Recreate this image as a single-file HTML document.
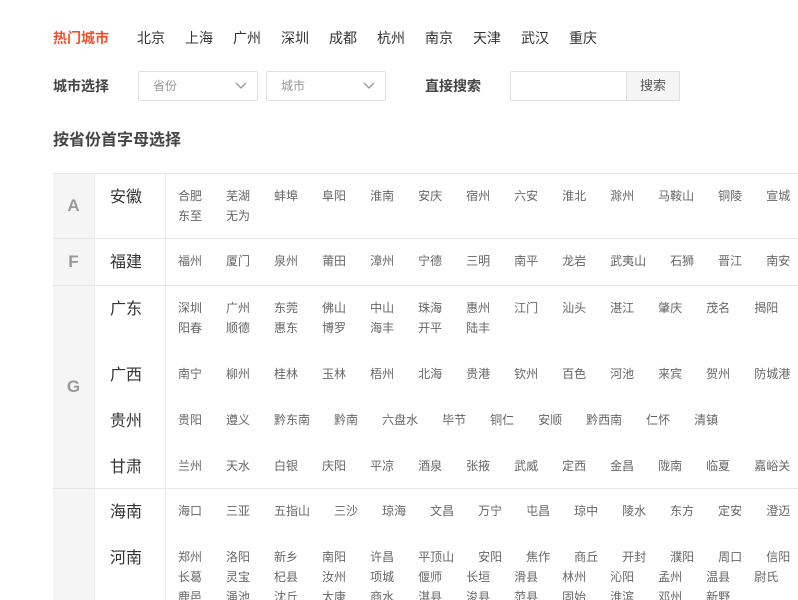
<!DOCTYPE html>
<html><head><meta charset="utf-8"><style>
*{margin:0;padding:0;box-sizing:border-box}
html,body{width:798px;height:600px;overflow:hidden}
body{background:#fff;font-family:"Liberation Sans","Noto Sans CJK SC",sans-serif;color:#333;position:relative}
.abs{position:absolute;white-space:nowrap}
.hot{left:53px;top:28px;font-size:14px;line-height:20px}
.hot b{color:#f0502a;margin-right:28px}
.hot span{margin-right:20px;color:#333}
.lbl{font-size:14px;font-weight:bold;color:#444;line-height:20px}
.sel{border:1px solid #e0e0e0;border-radius:2px;height:30px;font-size:12px;color:#999;line-height:28px;padding-left:14px}
.sel svg{position:absolute;right:10px;top:10px}
.wrap{position:absolute;left:53px;top:173px;width:745px;height:427px;overflow:hidden}
.table{width:800px;border-top:1px solid #e8e8e8}
.grp{display:flex;border-bottom:1px solid #e8e8e8}
.let{width:42px;background:#f5f5f5;color:#999;font-weight:bold;font-size:17px;display:flex;align-items:center;justify-content:center;border-right:1px solid #eee}
.provs{flex:1}
.pv{display:flex}
.pn{width:71px;padding:13px 0 0 15px;font-size:16px;line-height:22px;color:#333;border-right:1px solid #e8e8e8}
.cs{flex:1;padding:12px 0 14px 12px;font-size:12px;line-height:20px;color:#666}
.ln{white-space:nowrap;overflow:hidden;height:20px}
.ln span{margin-right:24px}
</style></head><body>
<div class="abs hot"><b>热门城市</b><span>北京</span><span>上海</span><span>广州</span><span>深圳</span><span>成都</span><span>杭州</span><span>南京</span><span>天津</span><span>武汉</span><span>重庆</span></div>
<div class="abs lbl" style="left:53px;top:76px">城市选择</div>
<div class="abs sel" style="left:138px;top:71px;width:120px">省份<svg width="12" height="8" viewBox="0 0 12 8"><path d="M1 1l5 5 5-5" stroke="#999" stroke-width="1.3" fill="none"/></svg></div>
<div class="abs sel" style="left:266px;top:71px;width:120px">城市<svg width="12" height="8" viewBox="0 0 12 8"><path d="M1 1l5 5 5-5" stroke="#999" stroke-width="1.3" fill="none"/></svg></div>
<div class="abs lbl" style="left:425px;top:76px">直接搜索</div>
<div class="abs" style="left:510px;top:71px;width:117px;height:30px;border:1px solid #e0e0e0;border-right:none"></div>
<div class="abs" style="left:626px;top:71px;width:54px;height:30px;border:1px solid #e0e0e0;background:#f5f5f5;font-size:13px;color:#555;text-align:center;line-height:28px">搜索</div>
<div class="abs" style="left:53px;top:130px;font-size:16px;font-weight:bold;color:#444;line-height:22px">按省份首字母选择</div>
<div class="wrap"><div class="table">
<div class="grp" style="height:65px"><div class="let">A</div><div class="provs">
<div class="pv"><div class="pn">安徽</div><div class="cs"><div class="ln"><span>合肥</span><span>芜湖</span><span>蚌埠</span><span>阜阳</span><span>淮南</span><span>安庆</span><span>宿州</span><span>六安</span><span>淮北</span><span>滁州</span><span>马鞍山</span><span>铜陵</span><span>宣城</span></div><div class="ln"><span>东至</span><span>无为</span></div></div></div>
</div></div>
<div class="grp" style="height:47px"><div class="let">F</div><div class="provs">
<div class="pv"><div class="pn">福建</div><div class="cs"><div class="ln"><span>福州</span><span>厦门</span><span>泉州</span><span>莆田</span><span>漳州</span><span>宁德</span><span>三明</span><span>南平</span><span>龙岩</span><span>武夷山</span><span>石狮</span><span>晋江</span><span>南安</span></div></div></div>
</div></div>
<div class="grp" style="height:203px"><div class="let">G</div><div class="provs">
<div class="pv" style="height:66px"><div class="pn">广东</div><div class="cs"><div class="ln"><span>深圳</span><span>广州</span><span>东莞</span><span>佛山</span><span>中山</span><span>珠海</span><span>惠州</span><span>江门</span><span>汕头</span><span>湛江</span><span>肇庆</span><span>茂名</span><span>揭阳</span></div><div class="ln"><span>阳春</span><span>顺德</span><span>惠东</span><span>博罗</span><span>海丰</span><span>开平</span><span>陆丰</span></div></div></div>
<div class="pv" style="height:46px"><div class="pn">广西</div><div class="cs"><div class="ln"><span>南宁</span><span>柳州</span><span>桂林</span><span>玉林</span><span>梧州</span><span>北海</span><span>贵港</span><span>钦州</span><span>百色</span><span>河池</span><span>来宾</span><span>贺州</span><span>防城港</span></div></div></div>
<div class="pv" style="height:46px"><div class="pn">贵州</div><div class="cs"><div class="ln"><span>贵阳</span><span>遵义</span><span>黔东南</span><span>黔南</span><span>六盘水</span><span>毕节</span><span>铜仁</span><span>安顺</span><span>黔西南</span><span>仁怀</span><span>清镇</span></div></div></div>
<div class="pv" style="height:45px"><div class="pn">甘肃</div><div class="cs"><div class="ln"><span>兰州</span><span>天水</span><span>白银</span><span>庆阳</span><span>平凉</span><span>酒泉</span><span>张掖</span><span>武威</span><span>定西</span><span>金昌</span><span>陇南</span><span>临夏</span><span>嘉峪关</span></div></div></div>
</div></div>
<div class="grp" style="height:300px"><div class="let" style="align-items:flex-start;padding-top:250px">H</div><div class="provs">
<div class="pv" style="height:46px"><div class="pn">海南</div><div class="cs"><div class="ln"><span>海口</span><span>三亚</span><span>五指山</span><span>三沙</span><span>琼海</span><span>文昌</span><span>万宁</span><span>屯昌</span><span>琼中</span><span>陵水</span><span>东方</span><span>定安</span><span>澄迈</span></div></div></div>
<div class="pv" style="height:254px"><div class="pn">河南</div><div class="cs"><div class="ln"><span>郑州</span><span>洛阳</span><span>新乡</span><span>南阳</span><span>许昌</span><span>平顶山</span><span>安阳</span><span>焦作</span><span>商丘</span><span>开封</span><span>濮阳</span><span>周口</span><span>信阳</span></div><div class="ln"><span>长葛</span><span>灵宝</span><span>杞县</span><span>汝州</span><span>项城</span><span>偃师</span><span>长垣</span><span>滑县</span><span>林州</span><span>沁阳</span><span>孟州</span><span>温县</span><span>尉氏</span></div><div class="ln"><span>鹿邑</span><span>渑池</span><span>沈丘</span><span>太康</span><span>商水</span><span>淇县</span><span>浚县</span><span>范县</span><span>固始</span><span>淮滨</span><span>邓州</span><span>新野</span></div></div></div>
</div></div>
</div></div>
</body></html>
